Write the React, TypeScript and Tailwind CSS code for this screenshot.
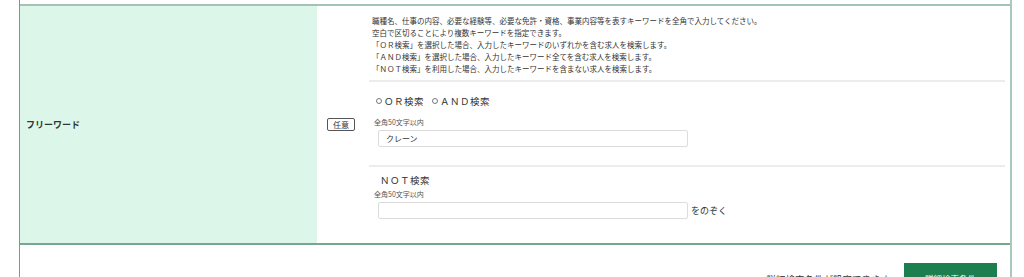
import React from "react";

const jp = "font-['Noto_Sans_CJK_JP','Noto_Sans',sans-serif]";

const notes = [
  "職種名、仕事の内容、必要な経験等、必要な免許・資格、事業内容等を表すキーワードを全角で入力してください。",
  "空白で区切ることにより複数キーワードを指定できます。",
  "「ＯＲ検索」を選択した場合、入力したキーワードのいずれかを含む求人を検索します。",
  "「ＡＮＤ検索」を選択した場合、入力したキーワード全てを含む求人を検索します。",
  "「ＮＯＴ検索」を利用した場合、入力したキーワードを含まない求人を検索します。",
];

const Radio: React.FC<{ label: string }> = ({ label }) => (
  <label className="flex items-center gap-[2px]">
    <span className="w-[6px] h-[6px] rounded-full border border-[#777] bg-white" />
    <span className="tracking-[0.5px]">{label}</span>
  </label>
);

export default function App() {
  return (
    <div className={`w-[1024px] h-[277px] overflow-hidden bg-white text-[#333] ${jp}`}>
      <div className="ml-[19px] w-[993px] h-full border-l border-l-[#6e9f87] border-r-2 border-r-[#a9c9bb]">
        <div className="h-[4px]" />

        {/* フリーワード row */}
        <div className="flex border-t-2 border-t-[#a3c4b5] border-b-2 border-b-[#77a78e]">
          <div className="w-[297px] bg-[#dcf7ea] flex items-center pl-[6px]">
            <span className="text-[9px] font-bold">フリーワード</span>
          </div>

          <div className="w-[52px] flex items-center pl-[10px]">
            <span className="w-[28px] h-[13px] border border-[#555] rounded-[2px] text-[8px] leading-none flex items-center justify-center">
              任意
            </span>
          </div>

          <div className="flex-1 pr-[5px] pt-[9px] pb-[24px]">
            <div className="pl-[3px] text-[7.5px] leading-[12px]">
              {notes.map((n) => (
                <p key={n}>{n}</p>
              ))}
            </div>
            <div className="mt-[5px] h-[2px] bg-[#ececec]" />

            {/* OR / AND */}
            <div className="mt-[12px] pl-[7px] h-[14px] flex items-center gap-[8px] text-[9.5px]">
              <Radio label="ＯＲ検索" />
              <Radio label="ＡＮＤ検索" />
            </div>
            <div className="mt-[9px] pl-[5px] h-[10px] leading-[10px] text-[7px] text-[#555]">
              全角50文字以内
            </div>
            <div className="mt-[3px] pl-[9px]">
              <div className="w-[310px] h-[17px] border border-[#dcdcdc] rounded-[2px] flex items-center pl-[7px] text-[8px]">
                クレーン
              </div>
            </div>

            <div className="mt-[18px] h-[2px] bg-[#ececec]" />

            {/* NOT */}
            <div className="mt-[6px] pl-[11px] h-[14px] leading-[14px] text-[9.5px] tracking-[0.5px]">
              ＮＯＴ検索
            </div>
            <div className="mt-[2px] pl-[5px] h-[10px] leading-[10px] text-[7px] text-[#555]">
              全角50文字以内
            </div>
            <div className="mt-[3px] pl-[9px] flex items-center gap-[3px]">
              <div className="w-[310px] h-[17px] border border-[#dcdcdc] rounded-[2px]" />
              <span className="text-[9px]">をのぞく</span>
            </div>
          </div>
        </div>

        {/* bottom bar */}
        <div className="flex items-start justify-end pr-[13px] pt-[18px] gap-[14px]">
          <span className="mt-[9px] text-[9.5px] leading-[14px]">詳細検索条件が設定できます</span>
          <button className="w-[93px] h-[30px] bg-[#1d7f4f] text-white text-[8.5px] flex items-center justify-center">
            詳細検索条件
          </button>
        </div>
      </div>
    </div>
  );
}
